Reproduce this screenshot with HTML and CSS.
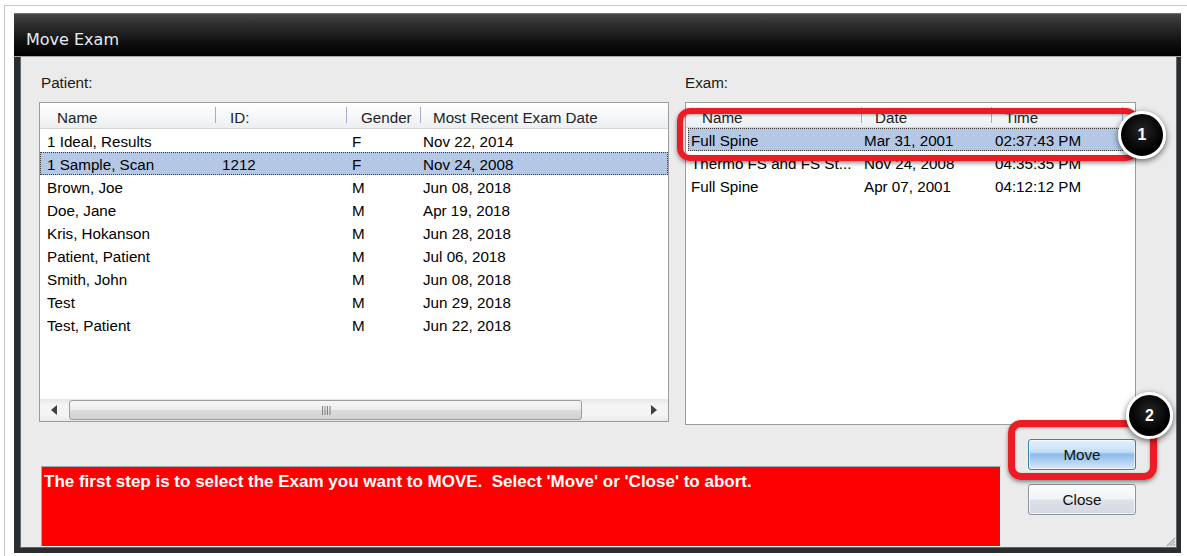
FILE: index.html
```html
<!DOCTYPE html>
<html lang="en">
<head>
<meta charset="utf-8">
<title>Move Exam</title>
<link rel="stylesheet" href="styles.css">
</head>
<body>
<div class="screen">
  <div class="frame">
    <div class="dialog">
      <div class="titlebar">Move Exam</div>
      <div class="content">
        <div class="panels">
          <div class="panel panel-patient">
            <div class="label label-patient">Patient:</div>
            <div class="listbox listbox-patient">
              <div class="lv-head head-patient">
                <div class="hc">Name</div>
                <div class="hc">ID:</div>
                <div class="hc">Gender</div>
                <div class="hc hc-last">Most Recent Exam Date</div>
              </div>
              <div class="lv-body">
                <div class="row row-patient"><span>1 Ideal, Results</span><span></span><span>F</span><span>Nov 22, 2014</span></div>
                <div class="row row-patient sel"><span>1 Sample, Scan</span><span>1212</span><span>F</span><span>Nov 24, 2008</span></div>
                <div class="row row-patient"><span>Brown, Joe</span><span></span><span>M</span><span>Jun 08, 2018</span></div>
                <div class="row row-patient"><span>Doe, Jane</span><span></span><span>M</span><span>Apr 19, 2018</span></div>
                <div class="row row-patient"><span>Kris, Hokanson</span><span></span><span>M</span><span>Jun 28, 2018</span></div>
                <div class="row row-patient"><span>Patient, Patient</span><span></span><span>M</span><span>Jul 06, 2018</span></div>
                <div class="row row-patient"><span>Smith, John</span><span></span><span>M</span><span>Jun 08, 2018</span></div>
                <div class="row row-patient"><span>Test</span><span></span><span>M</span><span>Jun 29, 2018</span></div>
                <div class="row row-patient"><span>Test, Patient</span><span></span><span>M</span><span>Jun 22, 2018</span></div>
              </div>
              <div class="hscroll">
                <div class="sb-btn">
                  <svg width="6" height="10" viewBox="0 0 6 10"><polygon points="6,0 6,10 0,5" fill="#3d4248"/></svg>
                </div>
                <div class="track">
                  <div class="thumb">
                    <svg width="10" height="9" viewBox="0 0 10 9"><path d="M1.5 0v9M4 0v9M6.5 0v9M9 0v9" stroke="#7f7f7f" stroke-width="1"/></svg>
                  </div>
                </div>
                <div class="sb-btn">
                  <svg width="6" height="10" viewBox="0 0 6 10"><polygon points="0,0 0,10 6,5" fill="#3d4248"/></svg>
                </div>
              </div>
            </div>
          </div>
          <div class="panel panel-exam">
            <div class="label">Exam:</div>
            <div class="listbox listbox-exam">
              <div class="lv-head head-exam">
                <div class="hc">Name</div>
                <div class="hc">Date</div>
                <div class="hc">Time</div>
                <div class="hc hc-last"></div>
              </div>
              <div class="lv-body">
                <div class="row row-exam sel"><span>Full Spine</span><span>Mar 31, 2001</span><span>02:37:43 PM</span></div>
                <div class="row row-exam"><span>Thermo FS and FS St...</span><span>Nov 24, 2008</span><span>04:35:35 PM</span></div>
                <div class="row row-exam"><span>Full Spine</span><span>Apr 07, 2001</span><span>04:12:12 PM</span></div>
              </div>
            </div>
          </div>
        </div>
        <div class="bottom">
          <div class="message">The first step is to select the Exam you want to MOVE.&nbsp; Select 'Move' or 'Close' to abort.</div>
          <div class="buttons">
            <div class="btn btn-move">Move</div>
            <div class="btn btn-close">Close</div>
          </div>
        </div>
        <svg class="grip" width="12" height="12" viewBox="0 0 12 12">
          <path d="M11 3L3 11M11 6L6 11M11 9L9 11" stroke="#a9a9a9" stroke-width="1.2"/>
        </svg>
      </div>
    </div>
  </div>

  <div class="callout callout-1"></div>
  <div class="badge badge-1">1</div>
  <div class="callout callout-2"></div>
  <div class="badge badge-2">2</div>
</div>
</body>
</html>
```
FILE: styles.css
```css
* { box-sizing: border-box; }

html, body {
  margin: 0;
  padding: 0;
  background: #ffffff;
}

body {
  font-family: "Liberation Sans", Arial, sans-serif;
  font-size: 15.2px;
  color: #000;
}

.screen {
  position: relative;
  width: 1187px;
  height: 556px;
  overflow: hidden;
}

/* thin page frame around the window */
.frame {
  margin: 5px 0 0 4px;
  border-top: 1px solid #c8c8c8;
  border-left: 1px solid #c8c8c8;
  padding: 7px 0 0 9px;
  height: 551px;
}

.dialog {
  width: 1167px;
  height: 540px;
  background: #2b2e30;
  display: flex;
  flex-direction: column;
}

.titlebar {
  height: 44px;
  flex: none;
  padding: 16px 0 0 12px;
  font-family: "DejaVu Sans", sans-serif;
  font-size: 16px;
  line-height: 20px;
  color: #e3ebf4;
  background: linear-gradient(#454545, #2e2e2e 25%, #0e0e0e 70%, #000);
  border-top: 1px solid #707070;
  border-bottom: 1px solid #a4a4a4;
}

.content {
  position: relative;
  flex: 1;
  margin: 0 4px 5px 6px;
  border: 1px solid #64686c;
  border-top: none;
  background: #ebebeb;
  padding: 17px 40px 0 18px;
  display: flex;
  flex-direction: column;
}

.panels {
  display: flex;
  gap: 16px;
  align-items: flex-start;
  flex: none;
}

.panel-patient { width: 630px; }
.panel-exam { width: 451px; }

.label {
  height: 18px;
  line-height: 18px;
  margin-bottom: 10px;
  color: #1a1a1a;
}

.label-patient { padding-left: 2px; }

/* list views */
.listbox {
  background: #fff;
  border: 1px solid #9c9c9c;
  display: flex;
  flex-direction: column;
  overflow: hidden;
}

.listbox-patient { height: 320px; }
.listbox-exam { height: 323px; }

.lv-head {
  flex: none;
  display: grid;
  background: linear-gradient(#ffffff, #f7f8f9 45%, #eceef1);
  border-bottom: 1px solid #d5d5d5;
  color: #222;
  line-height: 20px;
  white-space: nowrap;
}

.head-patient {
  height: 26px;
  grid-template-columns: 176px 131px 74px 1fr;
}

.head-exam {
  height: 25px;
  grid-template-columns: 176px 130px 131px 1fr;
}

.hc {
  padding: 5px 0 0 14px;
  background: linear-gradient(#a5abc8, #a5abc8) no-repeat right 4px / 1px 16px;
}

.head-exam .hc { padding: 5px 0 0 13px; }
.head-patient .hc:first-child { padding-left: 17px; }
.head-exam .hc:first-child { padding-left: 16px; }
.head-patient .hc-last { padding-left: 12px; }
.hc-last { background: none; }

.lv-body {
  flex: 1;
  overflow: hidden;
}

.row {
  display: grid;
  height: 23px;
  line-height: 23px;
  padding-top: 1px;
  white-space: nowrap;
}

.row-patient {
  grid-template-columns: 175px 130px 71px 1fr;
  padding-left: 7px;
}

.row-exam {
  grid-template-columns: 173px 131px 1fr;
  margin-left: 2px;
  width: 435px;
  padding-left: 3px;
}

.row span { overflow: hidden; }

.row.sel {
  background: #b4c8e6;
  outline: 1px dotted #3b3b3b;
  outline-offset: -1px;
}

/* horizontal scroll bar */
.hscroll {
  height: 22px;
  flex: none;
  display: flex;
  background: linear-gradient(#e6e6e6, #f4f4f4 25%, #f4f4f4 75%, #e8e8e8);
}

.sb-btn {
  width: 28px;
  flex: none;
  display: flex;
  align-items: center;
  justify-content: center;
}

.track {
  flex: 1;
  display: flex;
}

.thumb {
  width: 513px;
  margin: 1px 0 1px 1px;
  border: 1px solid #9d9d9d;
  border-radius: 3px;
  background: linear-gradient(#f6f6f6, #ececec 48%, #dcdcdc 52%, #d2d2d2);
  display: flex;
  align-items: center;
  justify-content: center;
}

/* status message and buttons */
.bottom {
  display: flex;
  flex: 1;
}

.message {
  width: 960px;
  height: 81px;
  margin: 41px 0 0 2px;
  background: #ff0000;
  border: 1px solid;
  border-color: #a3aab2 #f4f4f4 #f4f4f4 #a3aab2;
  color: #fff;
  font-weight: bold;
  font-size: 17px;
  line-height: 18px;
  padding: 6px 2px;
  white-space: nowrap;
}

.buttons {
  margin: 14px 0 0 27px;
  display: flex;
  flex-direction: column;
  gap: 14px;
}

.btn {
  width: 108px;
  height: 31px;
  border-radius: 3px;
  display: flex;
  align-items: center;
  justify-content: center;
  color: #111;
}

.btn-move {
  border: 1px solid #3c7fb1;
  background: linear-gradient(#e3f1fd, #c6e0f8 40%, #8ebbea 50%, #a8cdf2 70%, #d8eafb);
  box-shadow: inset 0 0 0 1px rgba(255, 255, 255, 0.6);
}

.btn-close {
  border: 1px solid #8d929b;
  background: linear-gradient(#fafbfc, #f2f3f6 48%, #dde1e9 52%, #d3d8e2);
  box-shadow: inset 0 0 0 1px rgba(255, 255, 255, 0.7);
}

.grip {
  position: absolute;
  right: 0;
  bottom: 0;
}

/* annotation overlays */
.callout {
  position: absolute;
  border-style: solid;
  border-color: #ec1c24;
  border-radius: 13px;
  box-shadow: 0 2px 4px rgba(0, 0, 0, 0.45), inset 0 1px 3px rgba(0, 0, 0, 0.35);
}

.callout-1 {
  left: 677px;
  top: 108px;
  width: 462px;
  height: 53px;
  border-width: 6px;
}

.callout-2 {
  left: 1008px;
  top: 420px;
  width: 149px;
  height: 60px;
  border-width: 7px;
}

.badge {
  position: absolute;
  width: 48px;
  height: 48px;
  border-radius: 50%;
  border: 3px solid #fff;
  background: radial-gradient(circle at 50% 40%, #262626, #000 65%);
  box-shadow: 0 2px 6px rgba(0, 0, 0, 0.6);
  color: #fff;
  font-family: "Liberation Sans", Arial, sans-serif;
  font-weight: bold;
  font-size: 16px;
  display: flex;
  align-items: center;
  justify-content: center;
}

.badge-1 {
  left: 1118px;
  top: 111px;
}

.badge-2 {
  left: 1126px;
  top: 392px;
  width: 47px;
  height: 47px;
}
```
